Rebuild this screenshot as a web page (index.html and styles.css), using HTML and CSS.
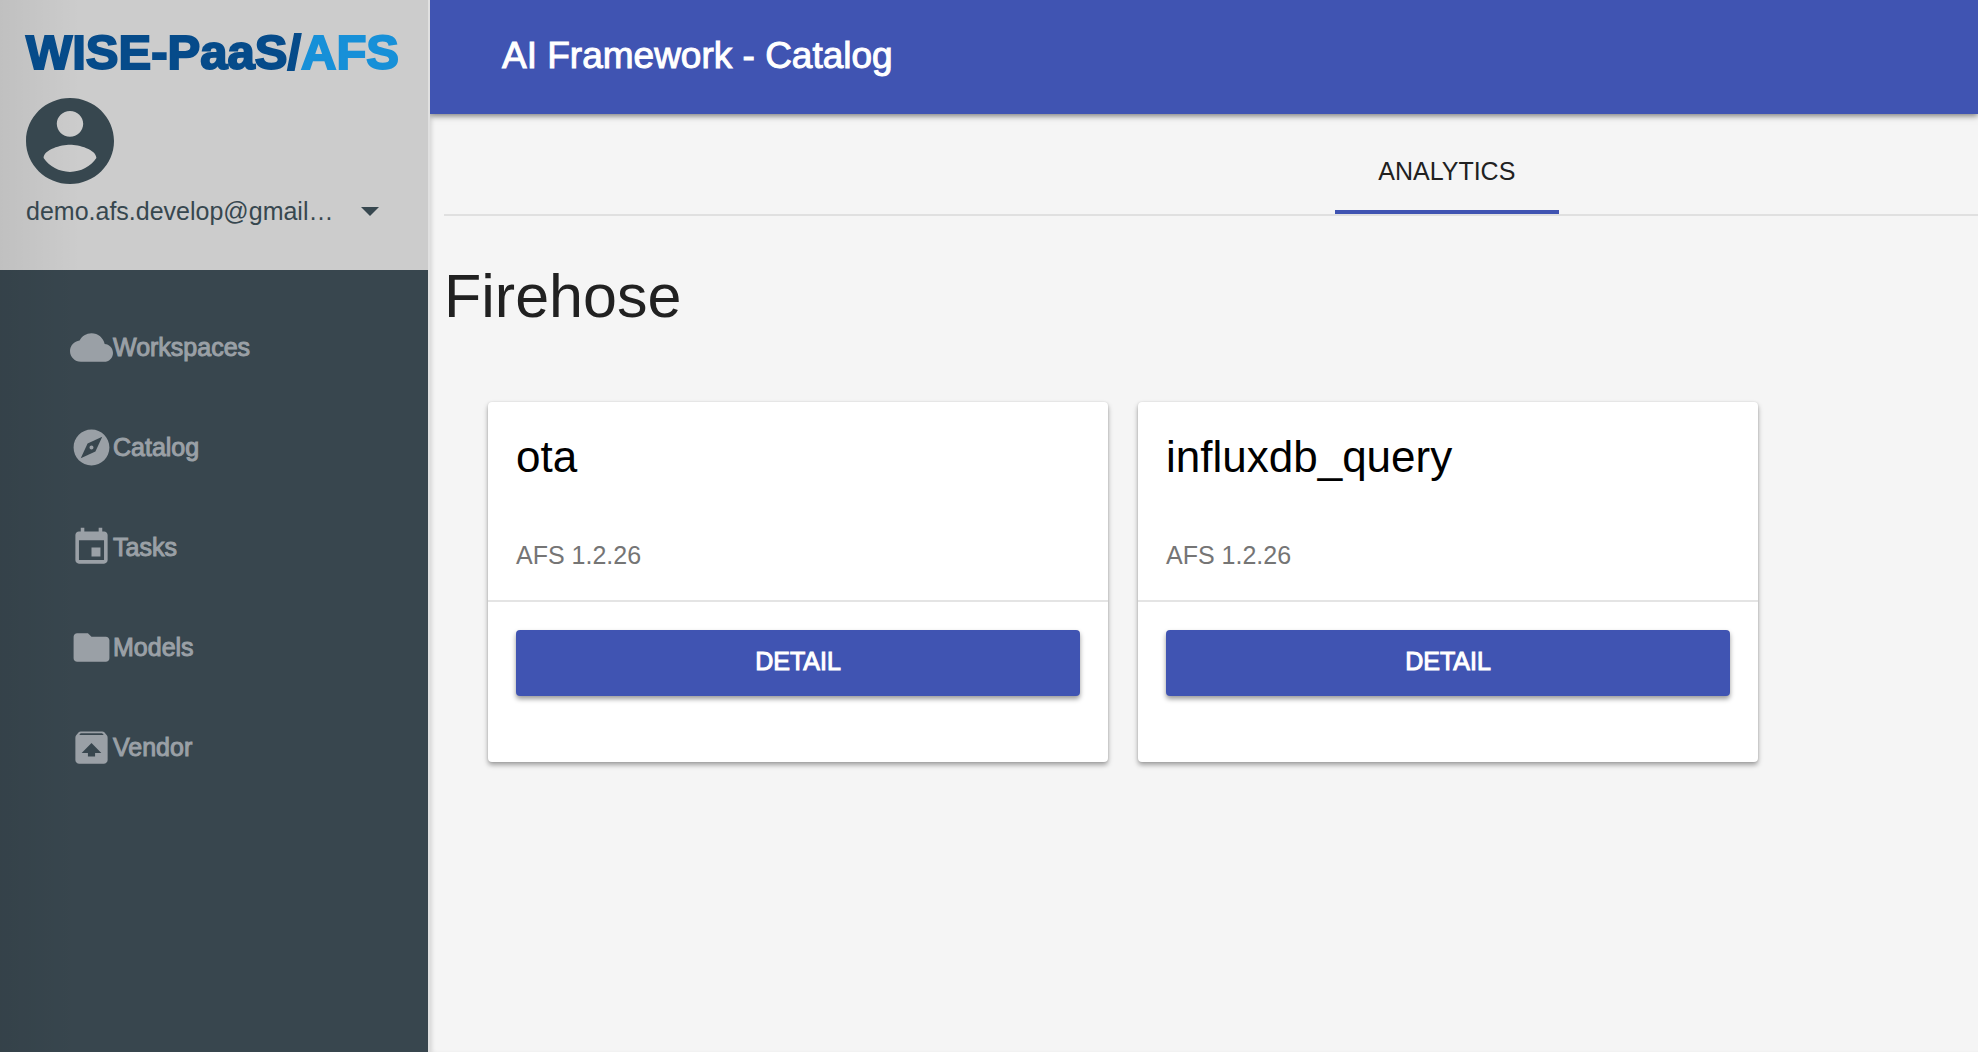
FILE: index.html
```html
<!DOCTYPE html>
<html lang="en">
<head>
<meta charset="utf-8">
<title>AI Framework - Catalog</title>
<link rel="stylesheet" href="styles.css">
</head>
<body>
<div class="app">
  <aside class="sidebar">
    <div class="profile">
      <div class="logo">WISE-PaaS/<span class="logo-accent">AFS</span></div>
      <svg class="avatar" viewBox="2 2 20 20" preserveAspectRatio="none" aria-hidden="true"><path d="M12 2C6.48 2 2 6.48 2 12s4.48 10 10 10 10-4.48 10-10S17.52 2 12 2zm0 3c1.66 0 3 1.34 3 3s-1.34 3-3 3-3-1.34-3-3 1.34-3 3-3zm0 14.2c-2.5 0-4.71-1.28-6-3.22.03-1.99 4-3.08 6-3.08 1.99 0 5.97 1.09 6 3.08-1.29 1.94-3.5 3.22-6 3.22z"/></svg>
      <button class="account" type="button" aria-haspopup="true">
        <span>demo.afs.develop@gmail…</span>
        <svg class="caret" viewBox="0 0 18 9" aria-hidden="true"><path d="M0 0h18l-9 9z"/></svg>
      </button>
    </div>
    <nav class="menu">
      <a class="menu-item" href="#workspaces">
        <svg class="icon" viewBox="0 0 24 24" aria-hidden="true"><path d="M19.35 10.04C18.67 6.59 15.64 4 12 4 9.11 4 6.6 5.64 5.35 8.04 2.34 8.36 0 10.91 0 14c0 3.31 2.69 6 6 6h13c2.76 0 5-2.24 5-5 0-2.64-2.05-4.78-4.65-4.96z"/></svg>
        <span>Workspaces</span>
      </a>
      <a class="menu-item" href="#catalog">
        <svg class="icon" viewBox="0 0 24 24" aria-hidden="true"><path d="M12 10.9c-.61 0-1.1.49-1.1 1.1s.49 1.1 1.1 1.1c.61 0 1.1-.49 1.1-1.1s-.49-1.1-1.1-1.1zM12 2C6.48 2 2 6.48 2 12s4.48 10 10 10 10-4.48 10-10S17.52 2 12 2zm2.19 12.19L6 18l3.81-8.19L18 6l-3.81 8.19z"/></svg>
        <span>Catalog</span>
      </a>
      <a class="menu-item" href="#tasks">
        <svg class="icon" viewBox="0 0 24 24" aria-hidden="true"><path d="M17 12h-5v5h5v-5zM16 1v2H8V1H6v2H5c-1.11 0-1.99.9-1.99 2L3 19c0 1.1.89 2 2 2h14c1.1 0 2-.9 2-2V5c0-1.1-.9-2-2-2h-1V1h-2zm3 18H5V8h14v11z"/></svg>
        <span>Tasks</span>
      </a>
      <a class="menu-item" href="#models">
        <svg class="icon" viewBox="0 0 24 24" aria-hidden="true"><path d="M10 4H4c-1.1 0-1.99.9-1.99 2L2 18c0 1.1.9 2 2 2h16c1.1 0 2-.9 2-2V8c0-1.1-.9-2-2-2h-8l-2-2z"/></svg>
        <span>Models</span>
      </a>
      <a class="menu-item" href="#vendor">
        <svg class="icon" viewBox="0 0 24 24" aria-hidden="true"><path d="M20.55 5.22l-1.39-1.68C18.88 3.21 18.47 3 18 3H6c-.47 0-.88.21-1.15.55L3.46 5.22C3.17 5.57 3 6.01 3 6.5V19c0 1.1.89 2 2 2h14c1.1 0 2-.9 2-2V6.5c0-.49-.17-.93-.45-1.28zM12 9.5l5.5 5.5H14v2h-4v-2H6.5L12 9.5zM5.12 5l.82-1h12l.93 1H5.12z"/></svg>
        <span>Vendor</span>
      </a>
    </nav>
  </aside>
  <div class="page">
    <header class="toolbar">
      <h1 class="toolbar-title">AI Framework - Catalog</h1>
    </header>
    <main class="content">
      <div class="tabs" role="tablist">
        <button class="tab" type="button" role="tab" aria-selected="true">ANALYTICS</button>
      </div>
      <h2 class="section-title">Firehose</h2>
      <div class="cards">
        <article class="card">
          <div class="card-head">
            <h3 class="card-title">ota</h3>
            <p class="card-meta">AFS 1.2.26</p>
          </div>
          <div class="card-actions">
            <button class="button" type="button">DETAIL</button>
          </div>
        </article>
        <article class="card">
          <div class="card-head">
            <h3 class="card-title">influxdb_query</h3>
            <p class="card-meta">AFS 1.2.26</p>
          </div>
          <div class="card-actions">
            <button class="button" type="button">DETAIL</button>
          </div>
        </article>
      </div>
    </main>
  </div>
</div>
</body>
</html>
```

FILE: styles.css
```css
* {
  box-sizing: border-box;
}

body {
  margin: 0;
  background: #f5f5f5;
  color: #212121;
  font-family: "Liberation Sans", Arial, Helvetica, sans-serif;
  font-size: 25px;
  line-height: 30px;
}

h1, h2, h3, p {
  margin: 0;
  font-weight: 400;
}

button {
  border: 0;
  padding: 0;
  background: none;
  color: inherit;
  font: inherit;
  cursor: pointer;
}

svg {
  display: block;
  flex: none;
  fill: currentColor;
}

.app {
  display: flex;
  min-height: 100vh;
}

/* Sidebar */
.sidebar {
  position: relative;
  z-index: 1;
  flex: none;
  width: 430px;
  border-right: 2px solid #e0e0e0;
  background: linear-gradient(to right, rgba(0, 0, 0, 0.06), rgba(0, 0, 0, 0) 80px), #38464e;
}

.profile {
  display: flex;
  flex-direction: column;
  align-items: flex-start;
  height: 270px;
  padding: 24px 26px;
  background: linear-gradient(to right, rgba(0, 0, 0, 0.06), rgba(0, 0, 0, 0) 80px), #ccc;
  color: #37474f;
}

.logo {
  color: #064b8a;
  font-size: 49px;
  font-weight: 700;
  line-height: 56px;
  white-space: nowrap;
  -webkit-text-stroke: 2px currentColor;
}

.logo-accent {
  color: #1790d8;
}

.avatar {
  width: 88px;
  height: 86px;
  margin-top: 18px;
}

.account {
  display: flex;
  align-items: center;
  gap: 28px;
  margin-top: 12px;
}

.caret {
  width: 18px;
  height: 9px;
}

.menu {
  display: flex;
  flex-direction: column;
  padding: 27px 70px;
}

.menu-item {
  display: flex;
  align-items: center;
  height: 100px;
  color: #9aa0a6;
  text-decoration: none;
  -webkit-text-stroke: 1px currentColor;
}

.icon {
  width: 43px;
  height: 43px;
}

/* Main column */
.page {
  flex: 1;
  min-width: 0;
  box-shadow: inset 4px 0 4px -2px rgba(0, 0, 0, 0.12);
}

.toolbar {
  display: flex;
  align-items: center;
  height: 114px;
  padding: 0 72px 2px;
  background: #4054b2;
  color: #fff;
  box-shadow: 0 2px 6px rgba(0, 0, 0, 0.5);
}

.toolbar-title {
  font-size: 37px;
  line-height: 44px;
  -webkit-text-stroke: 1px currentColor;
}

.content {
  padding-left: 14px;
}

.tabs {
  display: grid;
  grid-template-columns: 68fr 224px 32fr;
  border-bottom: 2px solid #e0e0e0;
}

.tab {
  grid-column: 2;
  height: 100px;
  padding-top: 18px;
  border-bottom: 4px solid #4054b2;
  line-height: 30px;
}

.section-title {
  padding: 44px 0 40px;
  font-size: 61px;
  line-height: 72px;
}

.cards {
  display: flex;
  flex-wrap: wrap;
  gap: 30px;
  padding: 30px 44px;
}

.card {
  width: 620px;
  border-radius: 4px;
  background: #fff;
  box-shadow: 0 3px 5px rgba(0, 0, 0, 0.35), 0 0 2px rgba(0, 0, 0, 0.12);
}

.card-head {
  padding: 28px 28px 30px;
  border-bottom: 2px solid #e4e4e4;
}

.card-title {
  color: #000;
  font-size: 44px;
  line-height: 54px;
}

.card-meta {
  margin-top: 56px;
  color: #757575;
}

.card-actions {
  padding: 28px 28px 66px;
}

.button {
  display: block;
  width: 100%;
  height: 66px;
  padding-bottom: 4px;
  border-radius: 4px;
  background: #4054b2;
  color: #fff;
  box-shadow: 0 3px 5px rgba(0, 0, 0, 0.4);
  -webkit-text-stroke: 1px currentColor;
}
```
